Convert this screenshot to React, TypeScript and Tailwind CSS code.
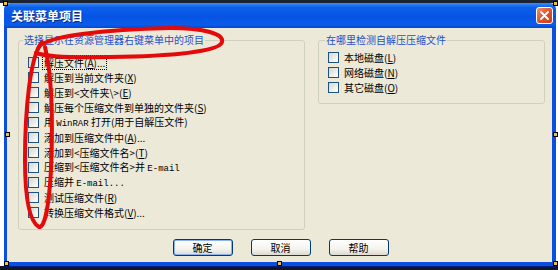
import React from "react";

const cjk = "font-['Noto_Sans_CJK_SC',sans-serif]";
const mono = "font-['Liberation_Mono',monospace] text-[9px]";

function Key({ k }: { k: string }) {
  return (
    <span>
      (<u>{k}</u>)
    </span>
  );
}

function Check({ children, focused }: { children: React.ReactNode; focused?: boolean }) {
  return (
    <div className="flex h-[15px] items-center gap-[3px]">
      <span className="h-[11px] w-[11px] shrink-0 border border-[#1c5180] bg-[linear-gradient(135deg,#d6d6cf_0%,#f4f4f0_70%,#ffffff_100%)]" />
      <span
        className={
          "whitespace-nowrap leading-[13px] " +
          (focused ? "border border-dotted border-black px-[1px]" : "border border-transparent px-[1px]")
        }
      >
        {children}
      </span>
    </div>
  );
}

function Button({ label, primary }: { label: string; primary?: boolean }) {
  return (
    <button
      className={
        "h-[17px] w-[60px] rounded-[3px] border border-[#003c74] bg-[linear-gradient(180deg,#ffffff_0%,#f4f3ee_60%,#dcdad0_100%)] text-[10px] leading-[13px] text-black " +
        (primary ? "shadow-[inset_0_0_0_1px_#8cb4f2]" : "")
      }
    >
      {label}
    </button>
  );
}

function Handle({ className }: { className: string }) {
  return <div className={"absolute h-[5px] w-[5px] border border-black bg-[#e9c43c] " + className} />;
}

export default function App() {
  return (
    <div className={"relative h-[270px] w-[558px] overflow-hidden bg-white text-[10px] text-black " + cjk}>
      <div className="h-[3px] bg-[#1d2431]" />

      {/* dialog window */}
      <div className="ml-[4px] flex h-[263px] w-[552px] flex-col">
        <div className="flex h-[25px] items-center justify-between rounded-t-[6px] bg-[linear-gradient(180deg,#3c8cf8_0%,#0b5fea_18%,#0554e4_55%,#0a5cea_88%,#0446cc_100%)] pl-[7px] pr-[3px]">
          <span className="text-[12px] font-bold leading-none text-white [text-shadow:1px_1px_0_#0a2a8a]">
            关联菜单项目
          </span>
          <div className="flex h-[17px] w-[17px] items-center justify-center rounded-[3px] border border-white bg-[linear-gradient(135deg,#f09272_0%,#e0542c_50%,#c83c18_100%)]">
            <svg width="9" height="9" viewBox="0 0 9 9">
              <path d="M1 1 L8 8 M8 1 L1 8" stroke="white" strokeWidth="1.8" strokeLinecap="round" />
            </svg>
          </div>
        </div>

        <div className="flex flex-1 flex-col border-b-[4px] border-l-[3px] border-r-[4px] border-[#0a50dc] bg-[#ece9d8] pl-[11px] pt-[6px] shadow-[0_1px_0_#001a80]">
          <div className="flex items-start gap-[13px]">
            <fieldset className="h-[196px] w-[287px] rounded-[3px] border border-[#d0d0bf] pl-[9px]">
              <legend className="-ml-[5px] px-[1px] leading-[12px] text-[#1f50c8]">
                选择显示在资源管理器右键菜单中的项目
              </legend>
              <div className="flex flex-col pt-[9px]">
                <Check focused>
                  解压文件<Key k="A" />...
                </Check>
                <Check>
                  解压到当前文件夹<Key k="X" />
                </Check>
                <Check>
                  解压到&lt;文件夹\&gt;<Key k="E" />
                </Check>
                <Check>
                  解压每个压缩文件到单独的文件夹<Key k="S" />
                </Check>
                <Check>
                  用 <span className={mono}>WinRAR</span> 打开(用于自解压文件)
                </Check>
                <Check>
                  添加到压缩文件中<Key k="A" />...
                </Check>
                <Check>
                  添加到&lt;压缩文件名&gt;<Key k="T" />
                </Check>
                <Check>
                  压缩到&lt;压缩文件名&gt;并 <span className={mono}>E-mail</span>
                </Check>
                <Check>
                  压缩并 <span className={mono}>E-mail...</span>
                </Check>
                <Check>
                  测试压缩文件<Key k="R" />
                </Check>
                <Check>
                  转换压缩文件格式<Key k="V" />...
                </Check>
              </div>
            </fieldset>

            <fieldset className="h-[70px] w-[227px] rounded-[3px] border border-[#d0d0bf] pl-[9px]">
              <legend className="-ml-[3px] px-[1px] leading-[12px] text-[#1f50c8]">在哪里检测自解压压缩文件</legend>
              <div className="flex flex-col pt-[4px]">
                <Check>
                  本地磁盘<Key k="L" />
                </Check>
                <Check>
                  网络磁盘<Key k="N" />
                </Check>
                <Check>
                  其它磁盘<Key k="O" />
                </Check>
              </div>
            </fieldset>
          </div>

          <div className="mt-[9px] flex justify-center gap-[18px] pl-[2px] pr-[11px]">
            <Button label="确定" primary />
            <Button label="取消" />
            <Button label="帮助" />
          </div>
        </div>
      </div>

      <div className="h-[4px] bg-[#14161c]" />

      {/* selection handles */}
      <Handle className="left-[3px] top-[1px]" />
      <Handle className="right-[0px] top-[1px]" />
      <Handle className="left-[5px] top-[132px]" />
      <Handle className="right-[0px] top-[132px]" />
      <Handle className="left-[4px] top-[261px]" />
      <Handle className="left-[277px] top-[261px]" />
      <Handle className="right-[0px] top-[261px]" />

      {/* red annotation */}
      <svg className="pointer-events-none absolute left-0 top-0" width="558" height="270" viewBox="0 0 558 270">
        <g fill="none" stroke="#e50a0a" strokeWidth="4" strokeLinecap="round" strokeLinejoin="round">
          <path d="M38 49 C40 36 110 29 170 28 C205 28 224 34 222 42 C220 52 170 56 110 57 C75 58 48 57 36 53" />
          <path d="M42 42 C30 56 25 110 25 160 C25 200 30 222 39 227 C45 228 49 205 51 170 C53 120 52 75 45 47" />
        </g>
      </svg>
    </div>
  );
}
